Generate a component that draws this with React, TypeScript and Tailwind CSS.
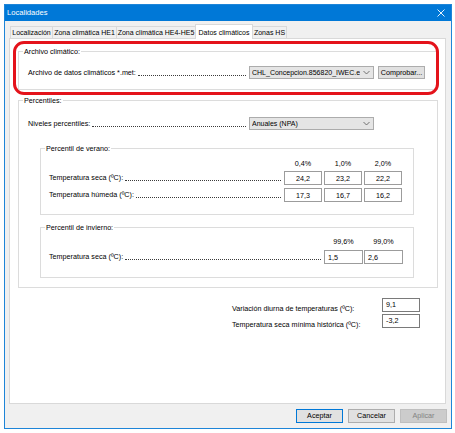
import React from "react";

function Leader() {
  return (
    <span className="flex-1 min-w-0 h-0 mt-[5px] ml-[2px] mr-[3px] border-b border-dotted border-[#3a3a3a]" />
  );
}

function Group({
  label,
  className,
  children,
}: {
  label: string;
  className: string;
  children?: React.ReactNode;
}) {
  return (
    <div className={"relative border border-[#dcdcdc] " + className}>
      <span className="absolute -top-[4px] left-[4px] bg-white px-[1px] leading-none">
        {label}
      </span>
      {children}
    </div>
  );
}

function Combo({ text }: { text: string }) {
  return (
    <div className="w-[125px] h-[13px] border border-[#acacac] bg-[#e5e5e5] flex items-center pl-[2px] pr-[3px] shrink-0">
      <span className="flex-1 min-w-0 overflow-hidden whitespace-nowrap leading-[10px] text-[7px]">{text}</span>
      <svg width="7" height="5" viewBox="0 0 7 5" className="ml-[3px] shrink-0">
        <path d="M0.5 1 L3.5 4 L6.5 1" fill="none" stroke="#555" strokeWidth="0.8" />
      </svg>
    </div>
  );
}

function Cell({ v, w = "w-[38px]", align = "center" }: { v: string; w?: string; align?: string }) {
  return (
    <div
      className={
        w +
        " h-[14px] border border-[#9c9c9c] bg-white flex pt-[3px] shrink-0 " +
        (align === "center" ? "justify-center" : "justify-start pl-[3px]")
      }
    >
      {v}
    </div>
  );
}

export default function App() {
  const tabs = [
    { t: "Localización", w: "w-[43px]" },
    { t: "Zona climática HE1", w: "w-[65px]" },
    { t: "Zona climática HE4-HE5", w: "w-[80px]" },
    { t: "Datos climáticos", w: "w-[58px]", sel: true },
    { t: "Zonas HS", w: "w-[35px]" },
  ];
  return (
    <div className="relative w-[455px] h-[433px] bg-white pt-[4px] pl-[4px] font-['Liberation_Sans',Arial,sans-serif] text-[7.2px] leading-none text-black">
      <div className="w-[448px] h-[425px] border border-[#1e85d8] bg-[#f0f0f0] flex flex-col">
        {/* Title bar */}
        <div className="h-[16px] bg-[#0078d7] flex items-center justify-between pl-[2px] pr-[6px] text-white text-[7.6px] shrink-0">
          <span>Localidades</span>
          <svg width="8" height="8" viewBox="0 0 8 8">
            <path d="M0.5 0.5 L7.5 7.5 M7.5 0.5 L0.5 7.5" stroke="#fff" strokeWidth="0.9" />
          </svg>
        </div>

        <div className="flex-1 flex flex-col pl-[4px] pr-[5px] pt-[3px]">
          {/* Tabs */}
          <div className="flex items-end h-[14px] pl-[1px] text-[7px]">
            {tabs.map((tb, i) => (
              <div
                key={tb.t}
                className={
                  tb.w +
                  " flex items-center justify-center whitespace-nowrap border-t border-l border-r border-[#d9d9d9] " +
                  (i > 0 ? "-ml-px " : "") +
                  (tb.sel
                    ? "h-[15px] -mb-px bg-white relative z-10"
                    : "h-[12px] bg-[#f0f0f0]")
                }
              >
                {tb.t}
              </div>
            ))}
          </div>

          {/* Panel */}
          <div className="h-[366px] border border-[#d9d9d9] bg-white pt-[12px] pl-[8px] pr-[7px] flex flex-col">
            <Group label="Archivo climático:" className="h-[39px] pt-[14px] pl-[9px] pr-[12px]">
              <div className="flex items-center">
                <span className="whitespace-nowrap">Archivo de datos climáticos *.met:</span>
                <Leader />
                <Combo text="CHL_Concepcion.856820_IWEC.epw" />
                <div className="ml-[4px] w-[47px] h-[13px] border border-[#adadad] bg-[#e1e1e1] flex items-center justify-center shrink-0">
                  Comprobar...
                </div>
              </div>
            </Group>

            <Group label="Percentiles:" className="mt-[10px] h-[188px] pt-[16px]">
              <div className="flex items-center pl-[9px] pr-[63px]">
                <span className="whitespace-nowrap">Niveles percentiles:</span>
                <Leader />
                <Combo text="Anuales (NPA)" />
              </div>

              <Group label="Percentil de verano:" className="mt-[18px] ml-[21px] mr-[23px] h-[67px] pt-[10px] pl-[8px] pr-[11px]">
                <div className="flex justify-end gap-[2px] h-[9px] items-center">
                  <div className="w-[38px] text-center">0,4%</div>
                  <div className="w-[38px] text-center">1,0%</div>
                  <div className="w-[38px] text-center">2,0%</div>
                </div>
                <div className="flex items-center mt-[3px]">
                  <span className="whitespace-nowrap">Temperatura seca (ºC):</span>
                  <Leader />
                  <div className="flex gap-[2px]">
                    <Cell v="24,2" />
                    <Cell v="23,2" />
                    <Cell v="22,2" />
                  </div>
                </div>
                <div className="flex items-center mt-[3px]">
                  <span className="whitespace-nowrap">Temperatura húmeda (ºC):</span>
                  <Leader />
                  <div className="flex gap-[2px]">
                    <Cell v="17,3" />
                    <Cell v="16,7" />
                    <Cell v="16,2" />
                  </div>
                </div>
              </Group>

              <Group label="Percentil de invierno:" className="mt-[12px] ml-[21px] mr-[23px] h-[51px] pt-[9px] pl-[8px] pr-[10px]">
                <div className="flex justify-end gap-[1px] h-[9px] items-center">
                  <div className="w-[39px] text-center">99,6%</div>
                  <div className="w-[39px] text-center">99,0%</div>
                </div>
                <div className="flex items-center mt-[4px]">
                  <span className="whitespace-nowrap">Temperatura seca (ºC):</span>
                  <Leader />
                  <div className="flex gap-[1px]">
                    <Cell v="1,5" w="w-[39px]" align="left" />
                    <Cell v="2,6" w="w-[39px]" align="left" />
                  </div>
                </div>
              </Group>
            </Group>

            <div className="mt-[10px] ml-[214px] grid grid-cols-[150px_38px] gap-y-[2px]">
              <span className="pt-[7px] whitespace-nowrap">Variación diurna de temperaturas (ºC):</span>
              <div className="h-[14px] border border-[#7a7a7a] bg-white pl-[3px] pt-[2px]">9,1</div>
              <span className="pt-[7px] whitespace-nowrap">Temperatura seca mínima histórica (ºC):</span>
              <div className="h-[14px] border border-[#7a7a7a] bg-white pl-[3px] pt-[2px]">-3,2</div>
            </div>
          </div>

          {/* Buttons */}
          <div className="flex justify-end gap-[5px] mt-[5px] -mr-[1px]">
            <div className="w-[47px] h-[14px] border border-[#0078d7] bg-[#e1e1e1] flex items-center justify-center">
              Aceptar
            </div>
            <div className="w-[47px] h-[14px] border border-[#adadad] bg-[#e1e1e1] flex items-center justify-center">
              Cancelar
            </div>
            <div className="w-[47px] h-[14px] border border-[#bfbfbf] bg-[#cccccc] text-[#838383] flex items-center justify-center">
              Aplicar
            </div>
          </div>
        </div>
      </div>

      {/* Red annotation */}
      <div className="absolute left-[13px] top-[41px] w-[426px] h-[54px] border-[3px] border-[#e4131b] rounded-[11px] pointer-events-none" />
    </div>
  );
}
